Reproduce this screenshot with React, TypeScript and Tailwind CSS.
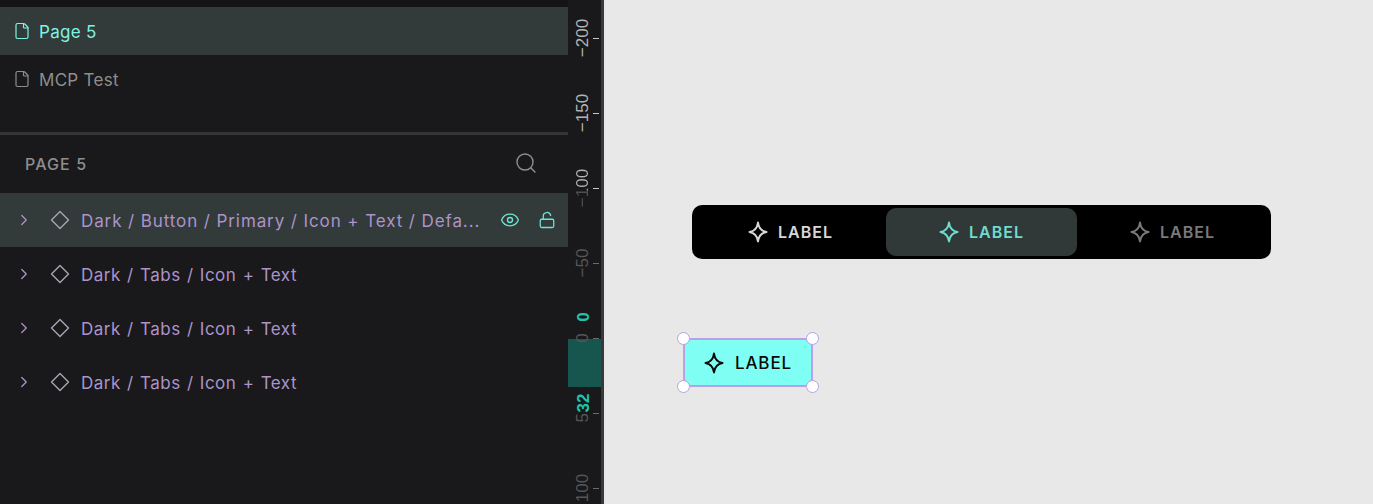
import { ChevronRight, Eye, File, LockOpen, Search } from 'lucide-react';

const font = "font-['Inter','Noto_Sans',sans-serif]";

function Spark({ className }: { className: string }) {
  return (
    <svg viewBox="0 0 20 22" fill="none" stroke="currentColor" strokeWidth="2" strokeLinejoin="round" className={className}>
      <path d="M10 1.5c.7 5.8 3 8.6 8.5 9.5-5.500.9-7.800 3.700-8.500 9.500-.7-5.800-3-8.600-8.500-9.500C7 10.100 9.300 7.300 10 1.500Z" />
    </svg>
  );
}

function LayerRow({ name, active }: { name: string; active?: boolean }) {
  return (
    <div className={`h-[54px] flex items-center pl-[15px] pr-[12px] text-[#ad93c9] ${active ? 'bg-[#323a3a]' : ''}`}>
      <ChevronRight size={18} strokeWidth={1.7} />
      <svg viewBox="0 0 20 20" fill="none" stroke="currentColor" strokeWidth="1.4" strokeLinejoin="round" className="ml-[17px] w-[20px] h-[20px] text-[#aaa4b4]">
        <path d="M10 1.500 18.500 10 10 18.500 1.500 10Z" />
      </svg>
      <span className={`ml-[11px] mt-[4px] text-[17px] whitespace-nowrap ${active ? 'tracking-[0.9px]' : 'tracking-[0.5px] [word-spacing:1px]'}`}>{name}</span>
      {active && (
        <div className="ml-auto flex items-center gap-[18px] text-[#6fe3d3] pl-[1px]">
          <Eye size={20} strokeWidth={1.6} />
          <LockOpen size={18} strokeWidth={1.7} />
        </div>
      )}
    </div>
  );
}

function RulerMark({ top, label, dim, mixed }: { top: number; label: string; dim?: boolean; mixed?: boolean }) {
  const tone = mixed
    ? 'bg-[linear-gradient(90deg,#4f4f4f_42%,#b4b4b4_48%)] bg-clip-text text-transparent'
    : dim
      ? 'text-[#565656]'
      : 'text-[#b4b4b4]';
  return (
    <>
      <div className={`absolute left-[25px] w-[6px] h-px ${dim ? 'bg-[#6a6a6a]' : 'bg-[#c8c8c8]'}`} style={{ top }} />
      <span
        className={`absolute left-[-5px] w-[40px] text-center -rotate-90 text-[17px] leading-[18px] font-['Liberation_Sans',sans-serif] whitespace-nowrap ${tone}`}
        style={{ top: top - 9 }}
      >
        {label}
      </span>
    </>
  );
}

function Tab({ color, bg }: { color: string; bg?: boolean }) {
  return (
    <div className={`flex-1 h-[48px] rounded-[10px] flex items-center justify-center gap-[10px] ${color} ${bg ? 'bg-[#303838]' : ''}`}>
      <Spark className="w-[20px] h-[22px]" />
      <span className="text-[16px] font-semibold tracking-[1px] leading-none">LABEL</span>
    </div>
  );
}

export default function App() {
  return (
    <div className={`${font} w-[1373px] h-[504px] flex overflow-hidden bg-[#19191b]`}>
      {/* layers sidebar */}
      <div className="w-[568px] shrink-0 pt-[7px] bg-[#19191b] relative">
        <div className="absolute inset-x-0 top-0 h-[7px] bg-[#141416]" />
        <div className="h-[48px] bg-[#323a3a] flex items-center pl-[13px] text-[#7df3e4]">
          <File size={18} strokeWidth={1.6} />
          <span className="ml-[8px] mt-[4px] text-[17px] tracking-[0.3px]">Page 5</span>
        </div>
        <div className="h-[48px] flex items-center pl-[13px] text-[#8e8e8e]">
          <File size={18} strokeWidth={1.6} />
          <span className="ml-[8px] mt-[4px] text-[17px] tracking-[0.3px]">MCP Test</span>
        </div>
        <div className="h-[3px] mt-[29px] bg-[#333538]" />
        <div className="h-[58px] flex items-center justify-between pl-[25px] pr-[30px] text-[#8e8e8e]">
          <span className="text-[16px] font-medium tracking-[1.1px]">PAGE 5</span>
          <Search size={24} strokeWidth={1.4} className="mb-[3px]" />
        </div>
        <LayerRow name="Dark / Button / Primary / Icon + Text / Defa..." active />
        <LayerRow name="Dark / Tabs / Icon + Text" />
        <LayerRow name="Dark / Tabs / Icon + Text" />
        <LayerRow name="Dark / Tabs / Icon + Text" />
      </div>

      {/* vertical ruler */}
      <div className="w-[33px] shrink-0 relative bg-[#19191b]">
        <div className="absolute left-0 right-0 top-[339px] h-[48px] bg-[#17564f]" />
        <RulerMark top={38} label="−200" />
        <RulerMark top={113} label="−150" />
        <RulerMark top={188} label="−100" mixed />
        <RulerMark top={263} label="−50" dim />
        <RulerMark top={338} label="0" dim />
        <RulerMark top={413} label="50" dim />
        <RulerMark top={488} label="100" dim />
        <span className="absolute left-[7px] w-[18px] text-center -rotate-90 top-[308px] text-[17px] leading-[18px] font-bold font-['Liberation_Sans',sans-serif] text-[#1fc4ad]">0</span>
        <span className="absolute left-[5px] w-[22px] text-center -rotate-90 top-[394px] bg-[#19191b] text-[17px] leading-[18px] font-bold font-['Liberation_Sans',sans-serif] text-[#1fc4ad]">32</span>
      </div>
      <div className="w-[3px] shrink-0 bg-[#37393c]" />

      {/* canvas */}
      <div className="flex-1 relative bg-[#e8e8e8]">
        <div className="absolute left-[88px] top-[205px] w-[579px] h-[54px] rounded-[10px] bg-black flex items-center px-[3px]">
          <Tab color="text-[#d8d8d8]" />
          <Tab color="text-[#6fdccd]" bg />
          <Tab color="text-[#7a7a7a]" />
        </div>

        <div className="absolute left-[79px] top-[338px] w-[130px] h-[49px] rounded-[8px] bg-[#7ffff4] border-2 border-[#bd9fe6] flex items-center justify-center gap-[11px] text-[#0a0a0a]">
          <Spark className="w-[20px] h-[22px]" />
          <span className="mt-[2px] text-[17px] font-medium tracking-[0.9px] leading-none">LABEL</span>
        </div>
        <div className="absolute left-[73px] top-[332px] w-[13px] h-[13px] rounded-full bg-white border-[1.5px] border-[#bd9fe6]" />
        <div className="absolute left-[202px] top-[332px] w-[13px] h-[13px] rounded-full bg-white border-[1.5px] border-[#bd9fe6]" />
        <div className="absolute left-[73px] top-[380px] w-[13px] h-[13px] rounded-full bg-white border-[1.5px] border-[#bd9fe6]" />
        <div className="absolute left-[202px] top-[380px] w-[13px] h-[13px] rounded-full bg-white border-[1.5px] border-[#bd9fe6]" />
      </div>
    </div>
  );
}
